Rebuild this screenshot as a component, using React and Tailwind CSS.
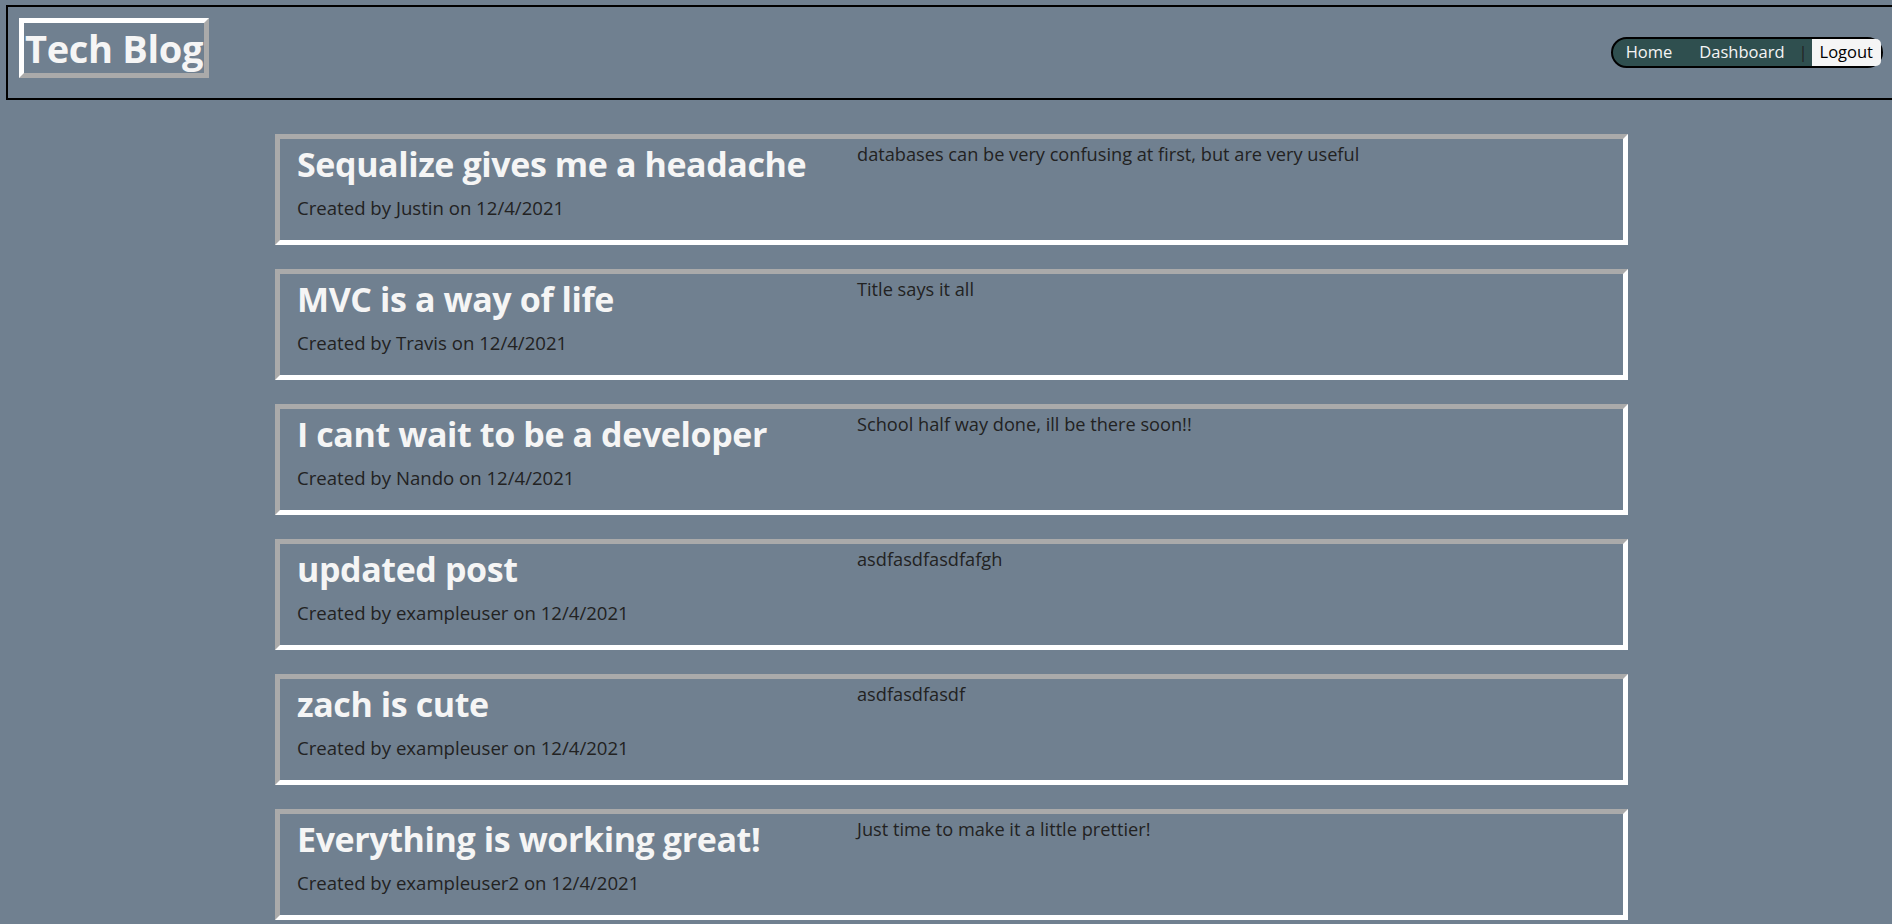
const posts = [
  {
    title: "Sequalize gives me a headache",
    author: "Justin",
    body: "databases can be very confusing at first, but are very useful",
  },
  { title: "MVC is a way of life", author: "Travis", body: "Title says it all" },
  {
    title: "I cant wait to be a developer",
    author: "Nando",
    body: "School half way done, ill be there soon!!",
  },
  { title: "updated post", author: "exampleuser", body: "asdfasdfasdfafgh" },
  { title: "zach is cute", author: "exampleuser", body: "asdfasdfasdf" },
  {
    title: "Everything is working great!",
    author: "exampleuser2",
    body: "Just time to make it a little prettier!",
  },
];

const PostCard = ({ title, author, body }) => {
  return (
    <div className="h-[111px] border-[5px] border-t-[#aaaaaa] border-l-[#aaaaaa] border-b-white border-r-white flex pl-[17px]">
      <div className="w-[560px] shrink-0">
        <h2 className="text-[34px] leading-[44px] tracking-[-0.4px] font-bold text-[#f5f5f5] mt-[3px]">
          {title}
        </h2>
        <p className="text-[18.6px] leading-[24px] text-[#222] mt-[10px]">
          Created by {author} on 12/4/2021
        </p>
      </div>
      <p className="text-[18.2px] leading-[24px] text-[#222] mt-[3px]">{body}</p>
    </div>
  );
};

const App = () => {
  return (
    <div className="min-h-screen bg-[#708090] overflow-hidden font-['Open_Sans','Noto_Sans',sans-serif]">
      <header className="ml-[6px] mt-[5px] w-[1892px] h-[95px] border-2 border-black flex justify-between items-start">
        <h1 className="ml-[11px] mt-[11px] border-[5px] border-t-white border-l-white border-b-[#aaaaaa] border-r-[#aaaaaa] px-[1px] text-[38px] leading-[50px] tracking-[-0.3px] font-bold text-[#f5f5f5]">
          Tech Blog
        </h1>
        <nav className="mt-[30px] mr-[13px] h-[31px] border-2 border-black rounded-full bg-[#2f4f4f] flex items-center pl-[13px] text-[16.5px] text-[#f5f5f5]">
          <a className="pr-[27px]">Home</a>
          <a>Dashboard</a>
          <span className="text-[#222] ml-[14px] mr-[4px]">|</span>
          <button className="h-full bg-[#f5f5f5] text-black px-[8px] rounded-r-[5px]">
            Logout
          </button>
        </nav>
      </header>

      <main className="ml-[275px] w-[1353px] mt-[34px] flex flex-col gap-[24px] pb-6">
        {posts.map((p) => (
          <PostCard key={p.title} {...p} />
        ))}
      </main>
    </div>
  );
};

export default App;
